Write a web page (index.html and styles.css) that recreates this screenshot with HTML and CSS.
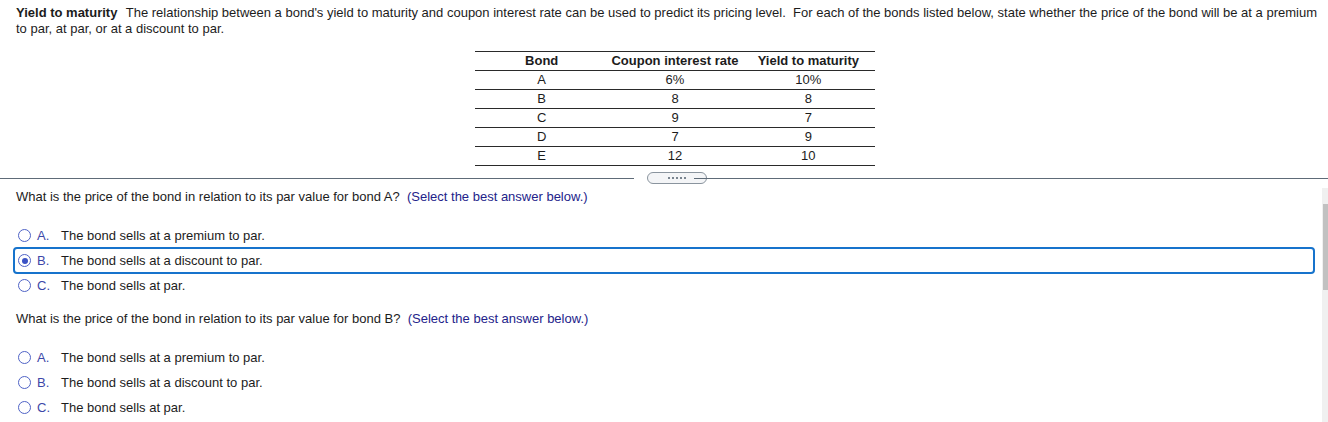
FILE: index.html
```html
<!DOCTYPE html>
<html>
<head>
<meta charset="utf-8">
<link rel="stylesheet" href="styles.css">
</head>
<body>
<div class="top">
  <p class="intro"><span class="title">Yield to maturity</span> The relationship between a bond's yield to maturity and coupon interest rate can be used to predict its pricing level.&nbsp; For each of the bonds listed below, state whether the price of the bond will be at a premium to par, at par, or at a discount to par.</p>
  <table class="bonds">
    <thead>
      <tr><th>Bond</th><th>Coupon interest rate</th><th>Yield to maturity</th></tr>
    </thead>
    <tbody>
      <tr><td>A</td><td>6%</td><td>10%</td></tr>
      <tr><td>B</td><td>8</td><td>8</td></tr>
      <tr><td>C</td><td>9</td><td>7</td></tr>
      <tr><td>D</td><td>7</td><td>9</td></tr>
      <tr><td>E</td><td>12</td><td>10</td></tr>
    </tbody>
  </table>
</div>
<div class="divider">
  <div class="rule"></div>
  <div class="pill"><span></span><span></span><span></span><span></span><span></span></div>
  <div class="rule"></div>
</div>
<div class="pane">
  <div class="content">
    <p class="q">What is the price of the bond in relation to its par value for bond A?&nbsp; <span class="hint">(Select the best answer below.)</span></p>
    <div class="opts">
      <div class="opt"><span class="radio"></span><span class="let">A.</span><span>The bond sells at a premium to par.</span></div>
      <div class="opt sel"><span class="radio on"></span><span class="let">B.</span><span>The bond sells at a discount to par.</span></div>
      <div class="opt"><span class="radio"></span><span class="let">C.</span><span>The bond sells at par.</span></div>
    </div>
    <p class="q q2">What is the price of the bond in relation to its par value for bond B?&nbsp; <span class="hint">(Select the best answer below.)</span></p>
    <div class="opts">
      <div class="opt"><span class="radio"></span><span class="let">A.</span><span>The bond sells at a premium to par.</span></div>
      <div class="opt"><span class="radio"></span><span class="let">B.</span><span>The bond sells at a discount to par.</span></div>
      <div class="opt"><span class="radio"></span><span class="let">C.</span><span>The bond sells at par.</span></div>
    </div>
  </div>
  <div class="scrollbar"><div class="thumb"></div></div>
</div>
</body>
</html>
```
FILE: styles.css
```css
html, body {
  margin: 0;
  padding: 0;
  background: #ffffff;
}
body {
  font-family: "Liberation Sans", Arial, sans-serif;
  font-size: 13px;
  color: #1c1c1c;
  width: 1328px;
  height: 422px;
  overflow: hidden;
}
.top {
  padding: 5px 6px 0 16px;
}
.intro {
  margin: 0;
  line-height: 16px;
}
.title {
  font-weight: bold;
  margin-right: 5px;
}
.bonds {
  border-collapse: collapse;
  width: 400px;
  margin: 14px 0 0 459px;
  table-layout: fixed;
}
.bonds th, .bonds td {
  text-align: center;
  height: 18px;
  padding: 0;
  line-height: 18px;
  border-bottom: 1px solid #2a2a2a;
}
.bonds th {
  border-top: 1px solid #2a2a2a;
  font-weight: bold;
}
.divider {
  display: flex;
  align-items: center;
  height: 12px;
  margin-top: 6px;
}
.rule {
  flex: 1;
  height: 1px;
  background: #5e6b78;
}
.pill {
  width: 58px;
  height: 10px;
  border: 1px solid #8a949e;
  border-radius: 6px;
  background: #f4f5f7;
  display: flex;
  justify-content: center;
  align-items: center;
  gap: 2px;
  margin-left: 13px;
  margin-right: -13px;
}
.pill span {
  width: 2px;
  height: 2px;
  background: #7a8590;
}
.pane {
  display: flex;
  height: 238px;
}
.content {
  flex: 1;
  padding-top: 5px;
}
.q {
  margin: 0 0 18px 16px;
  line-height: 16px;
}
.q2 {
  margin-top: 13px;
}
.hint {
  color: #23238a;
}
.opts {
  margin-left: 13px;
  margin-right: 7px;
}
.opt {
  box-sizing: border-box;
  height: 25px;
  border: 2px solid transparent;
  border-radius: 4px;
  display: flex;
  align-items: center;
  padding-left: 3px;
}
.opt.sel {
  height: 27px;
  margin: -1px 0;
  border-color: #1673cc;
}
.radio {
  box-sizing: border-box;
  width: 13px;
  height: 13px;
  border: 1.5px solid #4f63c6;
  border-radius: 50%;
  margin-right: 6px;
  display: flex;
  align-items: center;
  justify-content: center;
  background: #fff;
}
.radio.on::after {
  content: "";
  width: 6px;
  height: 6px;
  border-radius: 50%;
  background: #3b52c4;
}
.let {
  width: 24px;
  color: #3d47a8;
}
.scrollbar {
  width: 6px;
  margin-top: 4px;
  background: #f0f0f0;
}
.thumb {
  margin-top: 16px;
  margin-left: 1px;
  height: 86px;
  background: #c1c1c1;
}
```
